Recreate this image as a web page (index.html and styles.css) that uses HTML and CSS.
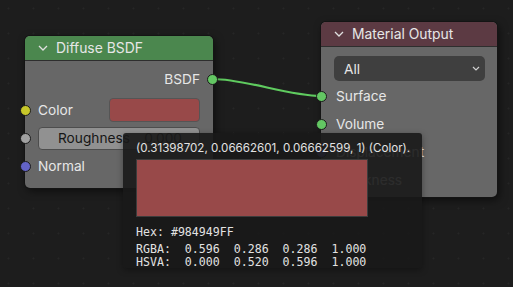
FILE: index.html
```html
<!DOCTYPE html>
<html>

	<head>
		<meta charset="UTF-8">
		<title>Node Editor</title>
		<link rel="stylesheet" href="styles.css">
	</head>

	<body>
		<div id="canvas">
			<svg class="links" width="513" height="287">
				<path d="M213 79 C245 79 289 96 321 96" />
			</svg>

			<div class="node" id="diffuse">
				<div class="node-head">
					<svg class="chev" width="10" height="6" viewBox="0 0 10 6"><path d="M1 1 L5 5 L9 1" /></svg>
					<span>Diffuse BSDF</span>
				</div>
				<div class="node-body">
					<div class="row out">BSDF<span class="sock green"></span></div>
					<div class="row gap-top"><span class="sock yellow"></span><span class="label">Color</span><span class="swatch"></span></div>
					<div class="row"><span class="sock grey"></span>
						<div class="slider"><span>Roughness</span><span>0.000</span></div>
					</div>
					<div class="row"><span class="sock purple"></span><span class="label">Normal</span></div>
				</div>
			</div>

			<div class="node" id="output">
				<div class="node-head">
					<svg class="chev" width="10" height="6" viewBox="0 0 10 6"><path d="M1 1 L5 5 L9 1" /></svg>
					<span>Material Output</span>
				</div>
				<div class="node-body">
					<div class="dropdown">
						<span>All</span>
						<svg width="8" height="5" viewBox="0 0 8 5"><path d="M1 1 L4 4 L7 1" /></svg>
					</div>
					<div class="row"><span class="sock green"></span><span class="label">Surface</span></div>
					<div class="row"><span class="sock green"></span><span class="label">Volume</span></div>
					<div class="row"><span class="sock purple"></span><span class="label">Displacement</span></div>
					<div class="row"><span class="label">Thickness</span></div>
				</div>
			</div>

			<div class="tooltip">
				<div class="tip-title">(0.31398702, 0.06662601, 0.06662599, 1) (Color).</div>
				<div class="tip-swatch"></div>
				<div class="mono hex">Hex: #984949FF</div>
				<div class="mono">RGBA:  0.596  0.286  0.286  1.000</div>
				<div class="mono">HSVA:  0.000  0.520  0.596  1.000</div>
			</div>
		</div>
	</body>

</html>
```

FILE: styles.css
```css
* {
	margin: 0;
	box-sizing: border-box;
}

body {
	background: #1d1d1d;
	font-family: Inter, "Noto Sans", sans-serif;
	font-size: 13.7px;
	color: #e6e6e6;
}

#canvas {
	position: relative;
	width: 513px;
	height: 287px;
	overflow: hidden;
	background-color: #1d1d1d;
	background-image: radial-gradient(circle, #262626 0.8px, transparent 1.2px);
	background-size: 25px 25px;
	background-position: -4px -4px;
}

.links {
	position: absolute;
	left: 0;
	top: 0;
}

.links path {
	fill: none;
	stroke: #5fcb5f;
	stroke-width: 2.2;
}

/* nodes */
.node {
	position: absolute;
	background: #676767;
	border-radius: 5px;
	box-shadow: 0 0 0 1px #141414, 2px 3px 8px rgba(0, 0, 0, .55);
	display: flex;
	flex-direction: column;
}

#diffuse {
	left: 25px;
	top: 36px;
	width: 188px;
	height: 152px;
}

#output {
	left: 321px;
	top: 22px;
	width: 176px;
	height: 175px;
}

.node-head {
	height: 25px;
	display: flex;
	align-items: center;
	gap: 8px;
	padding-left: 13px;
	border-radius: 5px 5px 0 0;
	border-bottom: 1px solid #2e2e2e;
	font-size: 13.9px;
}

#diffuse .node-head {
	background: #4b874e;
}

#output .node-head {
	background: #5c3a43;
}

.chev path {
	fill: none;
	stroke: #e0e0e0;
	stroke-width: 1.3;
}

.node-body {
	display: flex;
	flex-direction: column;
	padding: 4px 13px 0 13px;
}

#output .node-body {
	padding: 9px 12px 0 13px;
}

.row {
	position: relative;
	height: 28px;
	display: flex;
	align-items: center;
}

.row.out {
	justify-content: flex-end;
}

.gap-top {
	margin-top: 3px;
}

.label {
	flex: 1;
}

#output .label {
	padding-left: 2px;
}

/* sockets sit on the node edge */
.sock {
	position: absolute;
	left: -18px;
	top: 9px;
	width: 11px;
	height: 11px;
	border-radius: 50%;
	border: 1px solid #1a1a1a;
}

.row.out .sock {
	left: auto;
	right: -18px;
}

.green {
	background: #63c763;
}

.yellow {
	background: #c7c729;
}

.grey {
	background: #a1a1a1;
}

.purple {
	background: #6363c7;
}

.swatch {
	width: 91px;
	height: 24px;
	background: #984949;
	border: 1px solid #555;
	border-radius: 4px;
}

.slider {
	flex: 1;
	height: 23px;
	display: flex;
	align-items: center;
	justify-content: space-between;
	padding: 0 17px 0 19px;
	background: #919191;
	border: 1px solid #4d4d4d;
	border-radius: 4px;
	color: #161616;
}

.dropdown {
	height: 25px;
	display: flex;
	align-items: center;
	justify-content: space-between;
	padding: 0 5px 0 10px;
	background: #3f3f3f;
	border-radius: 5px;
	margin-bottom: 1px;
}

.dropdown path {
	fill: none;
	stroke: #cfcfcf;
	stroke-width: 1.2;
}

/* color tooltip */
.tooltip {
	position: absolute;
	left: 123px;
	top: 133px;
	width: 299px;
	height: 135px;
	padding: 6px 13px 0 13px;
	background: rgba(25, 25, 25, .91);
	border-radius: 3px;
	box-shadow: 0 2px 6px rgba(0, 0, 0, .35);
	color: #e2e2e2;
}

.tip-title {
	font-size: 11.6px;
	line-height: 18px;
	white-space: nowrap;
}

.tip-swatch {
	width: 232px;
	height: 58px;
	margin-top: 2px;
	background: #984949;
	border: 1px solid #3c3c3c;
}

.mono {
	font-family: "DejaVu Sans Mono", monospace;
	font-size: 11.6px;
	line-height: 13px;
	white-space: pre;
}

.hex {
	margin: 9px 0 4px 0;
}
```
